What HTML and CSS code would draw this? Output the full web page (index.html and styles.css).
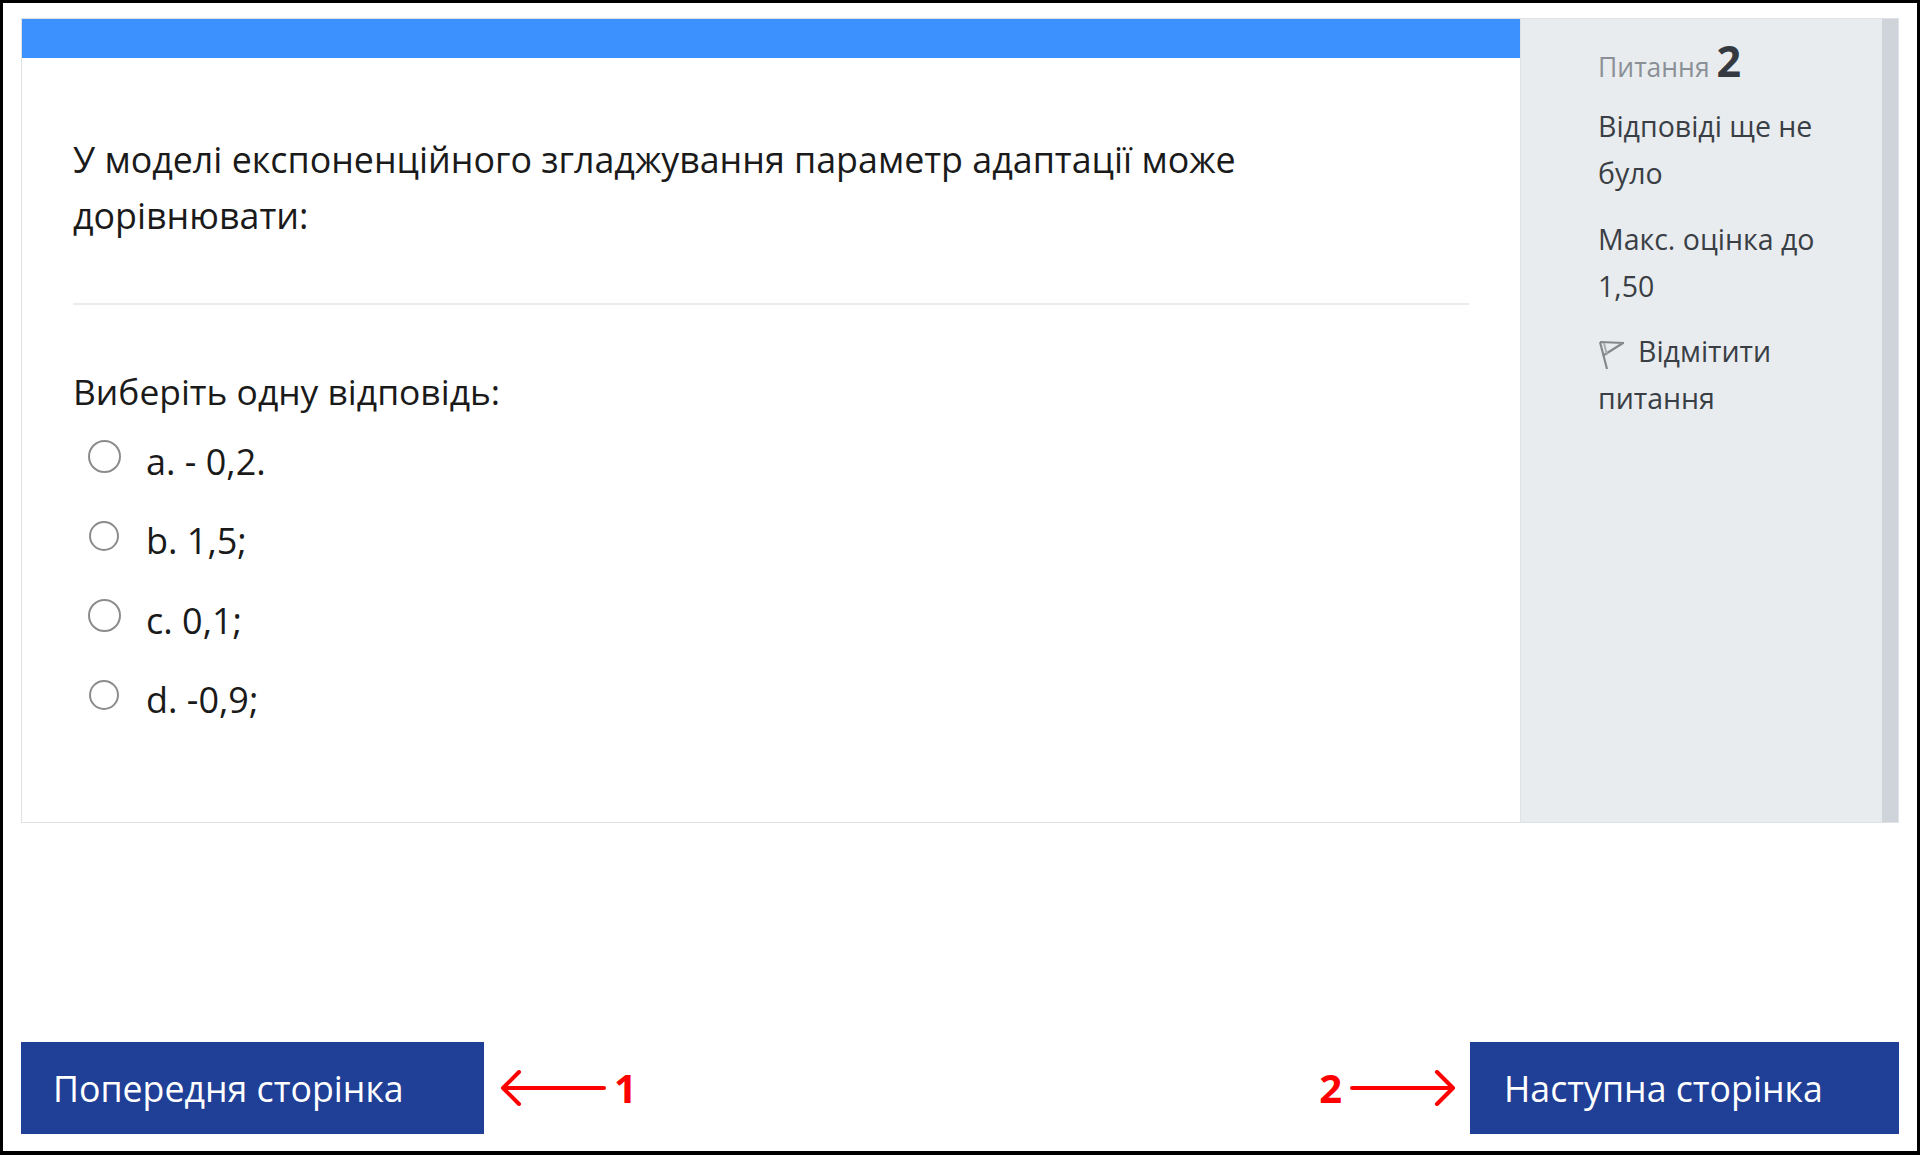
FILE: index.html
```html
<!DOCTYPE html>
<html lang="uk">
<head>
<meta charset="utf-8">
<title>Питання 2</title>
<link rel="stylesheet" href="styles.css">
</head>
<body>
<main class="page">
  <section class="card">
    <div class="question">
      <div class="accent"></div>
      <div class="content">
        <p class="prompt">У моделі експоненційного згладжування параметр адаптації може<br>дорівнювати:</p>
        <hr class="rule">
        <p class="choose">Виберіть одну відповідь:</p>
        <div class="options">
          <label class="option"><input class="radio radio-lg" type="radio" name="q"><span>a. - 0,2.</span></label>
          <label class="option"><input class="radio" type="radio" name="q"><span>b. 1,5;</span></label>
          <label class="option"><input class="radio radio-lg" type="radio" name="q"><span>c. 0,1;</span></label>
          <label class="option"><input class="radio" type="radio" name="q"><span>d. -0,9;</span></label>
        </div>
      </div>
    </div>
    <aside class="info">
      <div class="info-body">
        <h3 class="qno">Питання <b>2</b></h3>
        <p class="state">Відповіді ще не було</p>
        <p class="grade">Макс. оцінка до 1,50</p>
        <p class="flag">
          <svg class="flag-icon" viewBox="0 0 26 30" aria-hidden="true"><path d="M2 2 L9 29 M2 2 L25 3 L6 15" fill="none" stroke="#85888b" stroke-width="2.200"/><path d="M6 3 L9 15" fill="none" stroke="#a9acaf" stroke-width="2"/></svg>Відмітити питання
        </p>
      </div>
      <div class="strip"></div>
    </aside>
  </section>
  <nav class="pager">
    <div class="pager-side">
      <a class="btn btn-prev" href="#">Попередня сторінка</a>
      <svg class="arrow arrow-left" viewBox="0 0 106 36" aria-hidden="true"><path d="M104 18 H3 M19 2 L3 18 L19 34" fill="none" stroke="#fe0000" stroke-width="4" stroke-linecap="round" stroke-linejoin="round"/></svg>
      <span class="mark">1</span>
    </div>
    <div class="pager-side">
      <span class="mark">2</span>
      <svg class="arrow arrow-right" viewBox="0 0 106 36" aria-hidden="true"><path d="M2 18 H103 M87 2 L103 18 L87 34" fill="none" stroke="#fe0000" stroke-width="4" stroke-linecap="round" stroke-linejoin="round"/></svg>
      <a class="btn btn-next" href="#">Наступна сторінка</a>
    </div>
  </nav>
</main>
</body>
</html>
```
FILE: styles.css
```css
* { box-sizing: border-box; }
html, body { margin: 0; padding: 0; }
body {
  width: 1920px;
  height: 1155px;
  overflow: hidden;
  background: #fff;
  font-family: "Open Sans", "Noto Sans", sans-serif;
}
.page {
  width: 1920px;
  height: 1155px;
  border: solid #000;
  border-width: 3px 3px 4px 3px;
  padding: 15px 18px 17px 18px;
  display: flex;
  flex-direction: column;
  justify-content: space-between;
}
.card {
  display: flex;
  height: 805px;
  border: 1px solid #dee2e6;
}
.question {
  width: 1498px;
  display: flex;
  flex-direction: column;
  background: #fff;
}
.accent { height: 39px; background: #3d91ff; }
.content { padding: 0 51px; color: #1a1a1a; }
.prompt {
  margin: 73px 0 0;
  font-size: 35.800px;
  line-height: 56px;
}
.rule {
  margin: 60px 0 0;
  border: 0;
  border-top: 2px solid #e9ecef;
}
.choose {
  margin: 58px 0 0;
  font-size: 35.400px;
  line-height: 56px;
}
.options { display: flex; flex-direction: column; margin-top: 15px; }
.option {
  display: flex;
  align-items: flex-start;
  height: 79.300px;
  font-size: 36px;
  line-height: 56px;
}
.radio {
  appearance: none;
  width: 30px;
  height: 30px;
  margin: 8px 27px 0 16px;
  border: 2.500px solid #8c8c8c;
  border-radius: 50%;
  background: #fff;
  flex: none;
}
.radio-lg { width: 33px; height: 33px; margin: 6px 25px 0 15px; }
.info {
  flex: 1;
  display: flex;
  background: #e9ecef;
  border-left: 1px solid #dee2e6;
  color: #3a3f45;
}
.info-body { flex: 1; padding: 18px 30px 0 77px; font-size: 28.500px; line-height: 47px; }
.strip { width: 16px; background: #ced4da; }
.qno { margin: 0 0 12px; font-weight: 400; font-size: 26.500px; line-height: 47px; color: #8a9096; }
.qno b { font-size: 43px; font-weight: 700; color: #343a40; }
.state, .grade, .flag { margin: 0 0 18px; }
.state { margin-bottom: 19px; }
.flag-icon { width: 26px; height: 30px; margin-right: 14px; vertical-align: -8px; }
.pager { display: flex; justify-content: space-between; }
.pager-side { display: flex; align-items: center; }
.btn {
  display: flex;
  align-items: center;
  height: 92px;
  padding: 0 32px;
  background: #203f97;
  color: #fff;
  font-size: 35.700px;
  text-decoration: none;
}
.btn-prev { width: 463px; }
.btn-next { width: 429px; padding-left: 34px; }
.arrow { width: 106px; height: 36px; flex: none; }
.arrow-left { margin-left: 16px; }
.arrow-right { margin-right: 14px; }
.mark { font-size: 40px; font-weight: 700; color: #fe0000; line-height: 1; }
.pager-side .mark:last-child { margin-left: 8px; }
.pager-side .mark:first-child { margin-right: 8px; }
```
